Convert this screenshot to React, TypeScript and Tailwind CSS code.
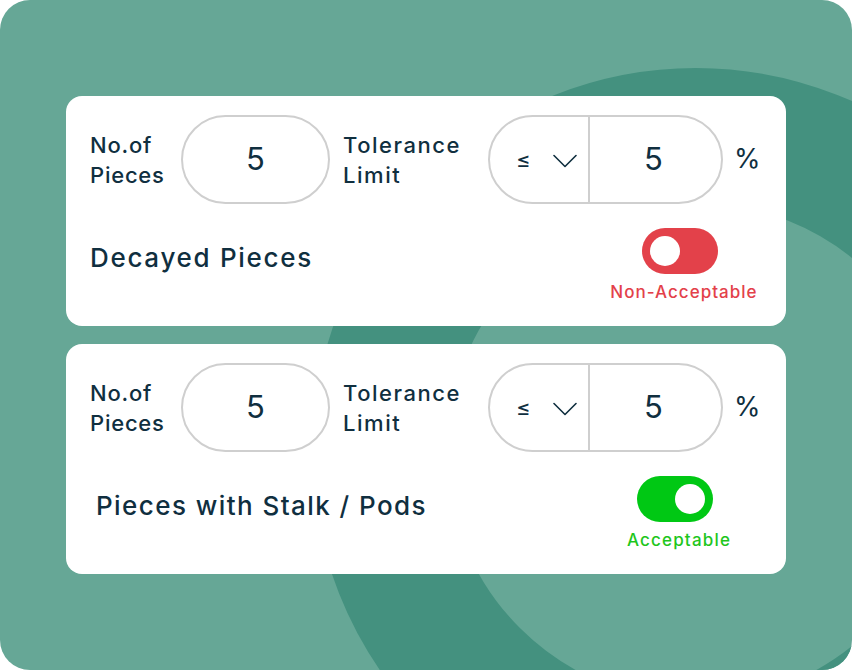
import React from "react";

type RowProps = {
  title: string;
  titleIndent?: boolean;
  on: boolean;
};

function Chevron() {
  return (
    <svg width="24" height="14" viewBox="0 0 24 14" fill="none">
      <path d="M1 1.5 L12 12.5 L23 1.5" stroke="#102f3f" strokeWidth="1.6" strokeLinecap="round" strokeLinejoin="round" />
    </svg>
  );
}

function Toggle({ on }: { on: boolean }) {
  return (
    <div
      className={
        on
          ? "flex h-[46px] w-[76px] items-center justify-end rounded-full bg-[#00c814] pr-[8px]"
          : "flex h-[46px] w-[76px] items-center justify-start rounded-full bg-[#e3414a] pl-[8px]"
      }
    >
      <div className="h-[30px] w-[30px] rounded-full bg-white" />
    </div>
  );
}

function Card({ title, titleIndent, on }: RowProps) {
  return (
    <div className="h-[230px] rounded-2xl bg-white pl-6 pt-[19px]">
      <div className="flex h-[89px] items-center">
        <div className="w-[76px] whitespace-nowrap text-[22px] font-medium leading-[30px] tracking-[0.035em]">
          No.of
          <br />
          Pieces
        </div>
        <div className="ml-[15px] flex h-[89px] w-[149px] items-center justify-center rounded-full border-2 border-[#cfcfcf] text-[31px]">
          5
        </div>
        <div className="ml-[13px] w-[118px] whitespace-nowrap text-[22px] font-medium leading-[30px] tracking-[0.07em]">
          Tolerance
          <br />
          Limit
        </div>
        <div className="ml-[27px] flex h-[89px] w-[235px] rounded-full border-2 border-[#cfcfcf]">
          <div className="flex w-[98px] items-center pl-[26px]">
            <span className="text-[22px] leading-none">≤</span>
            <span className="ml-[22px] mt-[2px]">
              <Chevron />
            </span>
          </div>
          <div className="w-[2px] bg-[#cfcfcf]" />
          <div className="flex flex-1 items-center justify-center pr-[4px] text-[31px]">5</div>
        </div>
        <div className="ml-[11px] text-[27px]">%</div>
      </div>
      <div className="flex items-start justify-between">
        <div
          className={
            titleIndent
              ? "ml-[6px] mt-[36px] text-[26px] font-medium leading-[36px] tracking-[0.055em]"
              : "mt-[36px] text-[26px] font-medium leading-[36px] tracking-[0.065em]"
          }
        >
          {title}
        </div>
        <div
          className={
            on
              ? "mr-[22px] mt-[24px] flex w-[170px] flex-col items-center"
              : "mr-[17px] mt-[24px] flex w-[170px] flex-col items-center"
          }
        >
          <div className="mr-[9px]">
            <Toggle on={on} />
          </div>
          <div
            className={
              on
                ? "mt-[6px] text-[17px] font-medium leading-[24px] tracking-[0.07em] text-[#1ec61c]"
                : "mt-[6px] text-[17px] font-medium leading-[24px] tracking-[0.06em] text-[#e3414a]"
            }
          >
            {on ? "Acceptable" : "Non-Acceptable"}
          </div>
        </div>
      </div>
    </div>
  );
}

export default function App() {
  return (
    <div className="h-[670px] w-[852px] bg-white font-['Inter',sans-serif] text-[#102f3f]">
      <div className="relative h-[670px] w-[852px] overflow-hidden rounded-[30px] bg-[#66a796]">
        <div className="absolute left-[312px] top-[68px] h-[768px] w-[768px] rounded-full border-[135px] border-[#44917f]" />
        <div className="relative flex flex-col gap-[18px] px-[66px] pt-[96px]">
          <Card title="Decayed Pieces" on={false} />
          <Card title="Pieces with Stalk / Pods" titleIndent on />
        </div>
      </div>
    </div>
  );
}
